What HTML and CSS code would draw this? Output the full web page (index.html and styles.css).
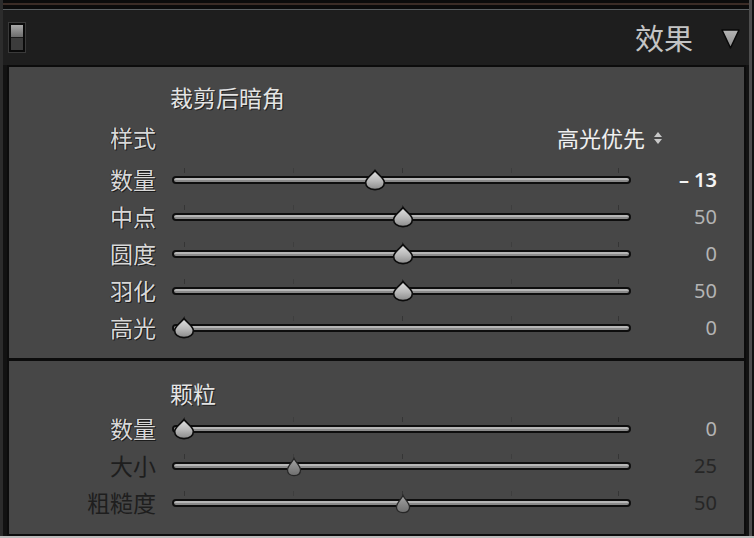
FILE: index.html
```html
<!DOCTYPE html>
<html lang="zh">
<head>
<meta charset="utf-8">
<title>效果</title>
<link rel="stylesheet" href="styles.css">
</head>
<body>
<div class="window">
  <div class="top"></div>
  <div class="header">
    <span class="toggle"><span class="toggle-on"></span><span class="toggle-off"></span></span>
    <span class="spacer"></span>
    <span class="header-title">效果</span>
    <svg class="collapse" width="19" height="20" viewBox="0 0 19 20"><defs><linearGradient id="tg" x1="0" y1="0" x2="0" y2="1"><stop offset="0" stop-color="#b4b4b4"/><stop offset="1" stop-color="#8e8e8e"/></linearGradient></defs><polygon points="1,1 18,1 9.5,19" fill="url(#tg)" stroke="#080808" stroke-width="1.5" stroke-linejoin="round"/></svg>
  </div>
  <div class="panel">
    <section class="sec sec-vignette">
      <div class="sec-title">裁剪后暗角</div>
      <div class="row row-style">
        <span class="lbl">样式</span>
        <span class="select">高光优先<svg width="10" height="14" viewBox="0 0 10 14"><polygon points="5,1 9,6 1,6" fill="#c8c8c8"/><polygon points="1,8 9,8 5,13" fill="#c8c8c8"/></svg></span>
      </div>
      <div class="row">
        <span class="lbl">数量</span>
        <div class="slider">
          <div class="track"></div>
          <span class="tick t0"></span><span class="tick t25"></span><span class="tick t50"></span><span class="tick t75"></span><span class="tick t100"></span>
          <svg class="thumb" style="left:192px" width="22" height="22" viewBox="0 0 22 22"><use href="#thumbshape"/></svg>
        </div>
        <span class="val strong">– 13</span>
      </div>
      <div class="row">
        <span class="lbl">中点</span>
        <div class="slider">
          <div class="track"></div>
          <span class="tick t0"></span><span class="tick t25"></span><span class="tick t50"></span><span class="tick t75"></span><span class="tick t100"></span>
          <svg class="thumb" style="left:220px" width="22" height="22" viewBox="0 0 22 22"><use href="#thumbshape"/></svg>
        </div>
        <span class="val">50</span>
      </div>
      <div class="row">
        <span class="lbl">圆度</span>
        <div class="slider">
          <div class="track"></div>
          <span class="tick t0"></span><span class="tick t25"></span><span class="tick t50"></span><span class="tick t75"></span><span class="tick t100"></span>
          <svg class="thumb" style="left:220px" width="22" height="22" viewBox="0 0 22 22"><use href="#thumbshape"/></svg>
        </div>
        <span class="val">0</span>
      </div>
      <div class="row">
        <span class="lbl">羽化</span>
        <div class="slider">
          <div class="track"></div>
          <span class="tick t0"></span><span class="tick t25"></span><span class="tick t50"></span><span class="tick t75"></span><span class="tick t100"></span>
          <svg class="thumb" style="left:220px" width="22" height="22" viewBox="0 0 22 22"><use href="#thumbshape"/></svg>
        </div>
        <span class="val">50</span>
      </div>
      <div class="row">
        <span class="lbl">高光</span>
        <div class="slider">
          <div class="track"></div>
          <span class="tick t0"></span><span class="tick t25"></span><span class="tick t50"></span><span class="tick t75"></span><span class="tick t100"></span>
          <svg class="thumb" style="left:1px" width="22" height="22" viewBox="0 0 22 22"><use href="#thumbshape"/></svg>
        </div>
        <span class="val">0</span>
      </div>
    </section>
    <section class="sec sec-grain">
      <div class="sec-title">颗粒</div>
      <div class="row">
        <span class="lbl">数量</span>
        <div class="slider">
          <div class="track"></div>
          <span class="tick t0"></span><span class="tick t25"></span><span class="tick t50"></span><span class="tick t75"></span><span class="tick t100"></span>
          <svg class="thumb" style="left:1px" width="22" height="22" viewBox="0 0 22 22"><use href="#thumbshape"/></svg>
        </div>
        <span class="val">0</span>
      </div>
      <div class="row dim">
        <span class="lbl">大小</span>
        <div class="slider">
          <div class="track"></div>
          <span class="tick t0"></span><span class="tick t25"></span><span class="tick t50"></span><span class="tick t75"></span><span class="tick t100"></span>
          <svg class="thumb small" style="left:114px" width="16" height="20" viewBox="0 0 16 20"><use href="#thumbsmall"/></svg>
        </div>
        <span class="val">25</span>
      </div>
      <div class="row dim">
        <span class="lbl">粗糙度</span>
        <div class="slider">
          <div class="track"></div>
          <span class="tick t0"></span><span class="tick t25"></span><span class="tick t50"></span><span class="tick t75"></span><span class="tick t100"></span>
          <svg class="thumb small" style="left:223px" width="16" height="20" viewBox="0 0 16 20"><use href="#thumbsmall"/></svg>
        </div>
        <span class="val">50</span>
      </div>
    </section>
  </div>
  <div class="bottom"></div>
</div>
<svg class="defs" width="0" height="0">
  <defs>
    <linearGradient id="thg" x1="0" y1="0" x2="0" y2="1"><stop offset="0" stop-color="#e2e2e2"/><stop offset="0.55" stop-color="#b8b8b8"/><stop offset="1" stop-color="#8a8a8a"/></linearGradient>
    <linearGradient id="thd" x1="0" y1="0" x2="0" y2="1"><stop offset="0" stop-color="#a4a4a4"/><stop offset="1" stop-color="#6e6e6e"/></linearGradient>
    <path id="thumbshape" d="M11 1.5 C12.6 4.2 19.2 8.4 20.2 12.6 C21 17.6 16.8 20.6 11 20.6 C5.2 20.6 1 17.6 1.8 12.6 C2.8 8.4 9.4 4.2 11 1.5 Z" fill="url(#thg)" stroke="#0c0c0c" stroke-width="1.6"/>
    <path id="thumbsmall" d="M8 1.5 C9.2 4.5 14.5 9 14.5 13 C14.5 17 11.5 18.6 8 18.6 C4.5 18.6 1.5 17 1.5 13 C1.5 9 6.8 4.5 8 1.5 Z" fill="url(#thd)" stroke="#262626" stroke-width="1.3"/>
  </defs>
</svg>
</body>
</html>
```
FILE: styles.css
```css
* { box-sizing: border-box; }
html, body { margin: 0; padding: 0; }
body {
  background: #121212;
  font-family: "Noto Sans CJK SC", "Noto Sans", sans-serif;
}
.window {
  width: 754px;
  height: 538px;
  display: flex;
  flex-direction: column;
  background:
    linear-gradient(to right, #2c2c2c 0 3px, transparent 3px 749px, #4e4e4e 749px 752px, transparent 752px),
    #121212;
  overflow: hidden;
}
.top {
  height: 11px;
  margin: 0 5px 0 3px;
  background: linear-gradient(to bottom, #0c0c0c 0 3px, #3b2c26 3px 5px, #0c0c0c 5px 9px, #5a5f62 9px 10px, #1d1d1d 10px);
}
.header {
  height: 54px;
  margin: 0 5px 0 3px;
  background: #1e1e1e;
  display: flex;
  align-items: center;
  padding: 0 9px 0 6px;
}
.toggle {
  width: 16px;
  height: 29px;
  border: 2px solid #0a0a0a;
  box-shadow: 0 0 0 1px #3a3a3a;
  display: flex;
  flex-direction: column;
  margin-top: -2px;
}
.toggle-on {
  height: 13px;
  background: linear-gradient(to bottom, #a8a8a8, #6c6c6c);
  border-bottom: 1px solid #1a1a1a;
}
.toggle-off {
  flex: 1;
  background: #3c3c3c;
}
.spacer { flex: 1; }
.header-title {
  font-size: 29px;
  color: #c4c4c4;
  line-height: 1;
  margin-right: 28px;
  margin-top: -1px;
}
.collapse { display: block; margin-top: 1px; }

.panel {
  margin: 0 8px 0 7px;
  height: 471px;
  border: 2px solid #0c0c0c;
  background: #474747;
  display: flex;
  flex-direction: column;
}
.bottom {
  height: 2px;
  background: #bcbcbc;
}
.sec-vignette {
  height: 294px;
  padding-top: 15px;
  border-bottom: 3px solid #0c0c0c;
}
.sec-grain {
  flex: 1;
  padding-top: 17px;
}
.sec-title {
  height: 30px;
  line-height: 30px;
  padding-left: 161px;
  font-size: 23px;
  color: #e4e4e4;
  text-shadow: 1px 1px 0 #202020;
}
.sec-vignette .sec-title { margin-bottom: 7px; }
.sec-grain .sec-title { margin-bottom: 2px; }

.row {
  display: grid;
  grid-template-columns: 163px 459px 86px;
  height: 37px;
  align-items: center;
}
.row-style { margin-bottom: 5px; }
.lbl {
  text-align: right;
  padding-right: 16px;
  font-size: 23px;
  line-height: 37px;
  color: #d8d8d8;
  text-shadow: 1px 1px 0 #1c1c1c, -1px 0 0 #2a2a2a;
}
.select {
  grid-column: 2 / 4;
  margin-left: 385px;
  font-size: 22px;
  line-height: 37px;
  color: #f0f0f0;
  display: flex;
  align-items: center;
  gap: 8px;
}
.select svg { display: block; margin-top: 1px; }

.slider {
  position: relative;
  height: 37px;
  display: flex;
  align-items: center;
}
.track {
  width: 100%;
  height: 8px;
  border: 2px solid #0e0e0e;
  border-radius: 4px;
  background: linear-gradient(to bottom, #b6b6b6 0 50%, #8a8a8a 50%);
  margin-top: 1px;
}
.tick {
  position: absolute;
  top: 7px;
  width: 1px;
  height: 5px;
  background: #353535;
}
.t0 { left: 12px; }
.t25 { left: 121px; opacity: 0.5; }
.t50 { left: 230px; }
.t75 { left: 339px; opacity: 0.5; }
.t100 { left: 446px; }
.thumb {
  position: absolute;
  top: 8px;
  display: block;
}
.thumb.small { top: 10px; }

.val {
  text-align: right;
  font-family: "Noto Sans", sans-serif;
  font-size: 20px;
  line-height: 37px;
  color: #b4b4b4;
}
.val.strong {
  color: #f4f4f4;
  font-weight: 600;
}
.dim .lbl {
  color: #1e1e1e;
  text-shadow: none;
}
.dim .val { color: #262626; }
.defs { position: absolute; width: 0; height: 0; }
```
